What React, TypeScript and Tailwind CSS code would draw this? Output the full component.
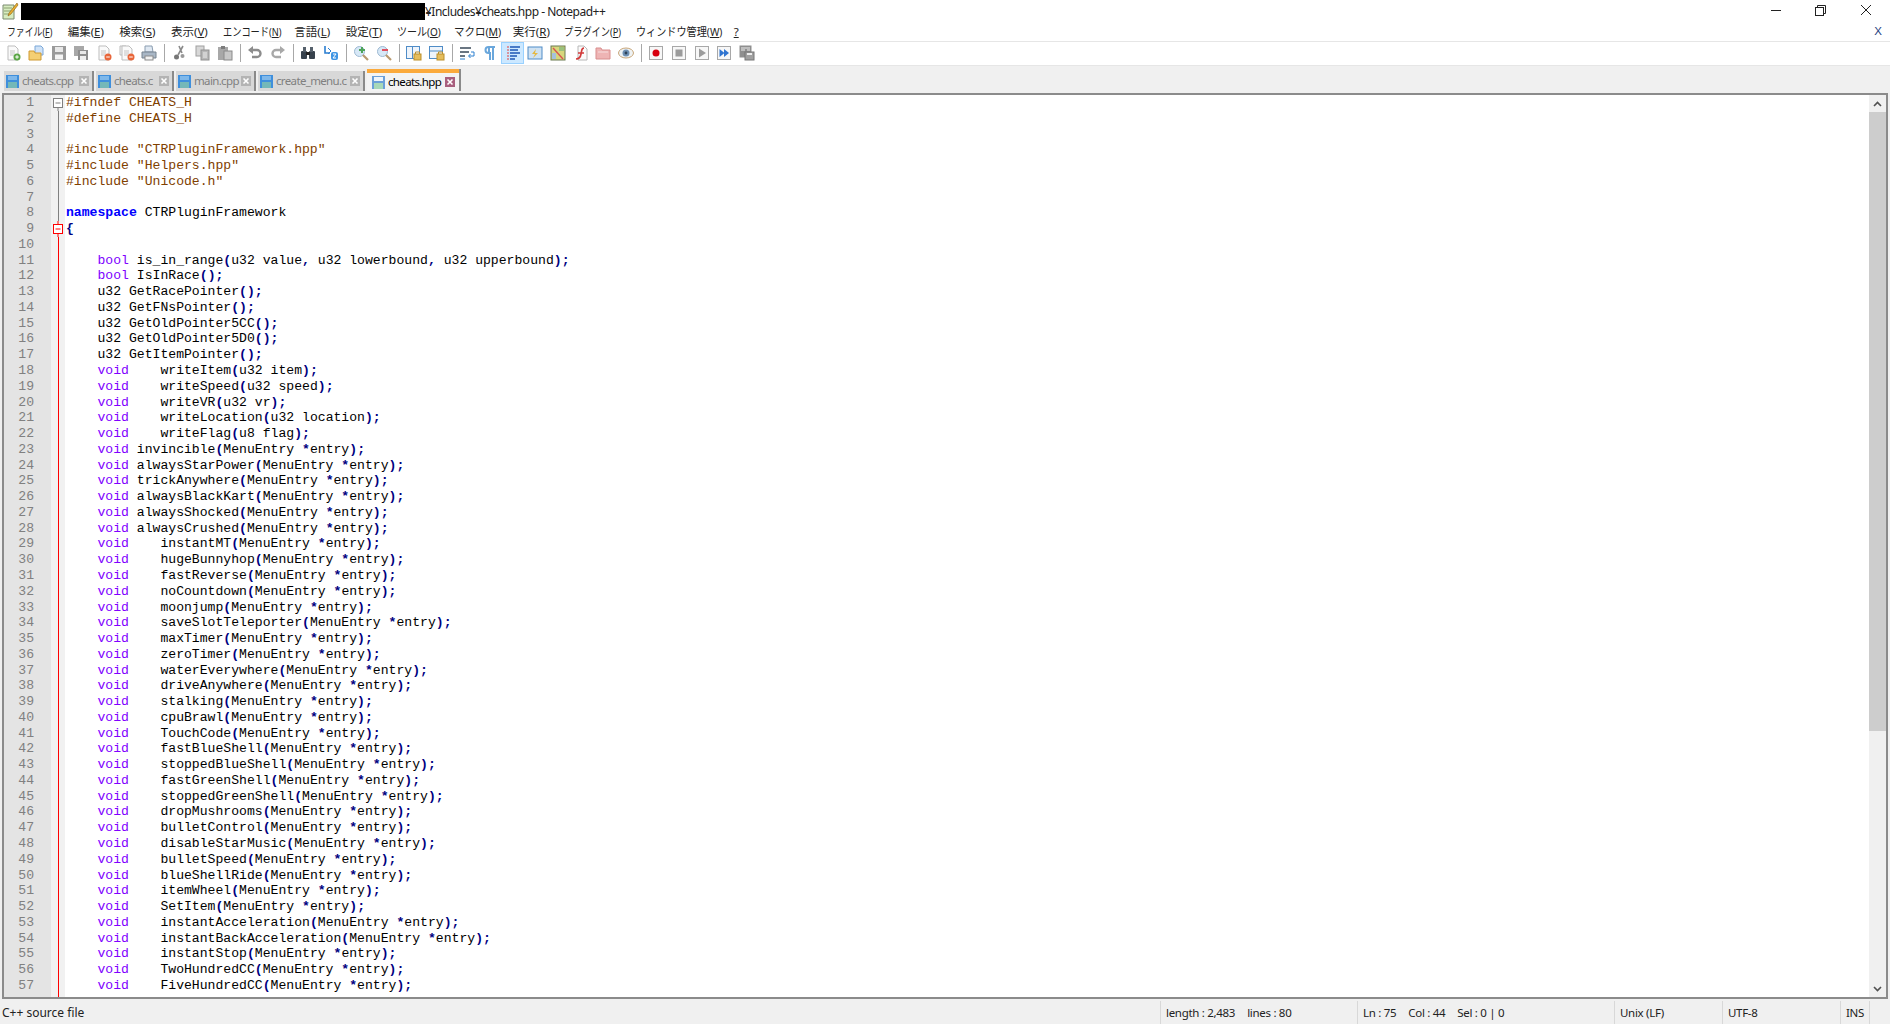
import type { ReactNode } from "react";

const code = `#ifndef CHEATS_H
#define CHEATS_H

#include "CTRPluginFramework.hpp"
#include "Helpers.hpp"
#include "Unicode.h"

namespace CTRPluginFramework
{

    bool is_in_range(u32 value, u32 lowerbound, u32 upperbound);
    bool IsInRace();
    u32 GetRacePointer();
    u32 GetFNsPointer();
    u32 GetOldPointer5CC();
    u32 GetOldPointer5D0();
    u32 GetItemPointer();
    void    writeItem(u32 item);
    void    writeSpeed(u32 speed);
    void    writeVR(u32 vr);
    void    writeLocation(u32 location);
    void    writeFlag(u8 flag);
    void invincible(MenuEntry *entry);
    void alwaysStarPower(MenuEntry *entry);
    void trickAnywhere(MenuEntry *entry);
    void alwaysBlackKart(MenuEntry *entry);
    void alwaysShocked(MenuEntry *entry);
    void alwaysCrushed(MenuEntry *entry);
    void    instantMT(MenuEntry *entry);
    void    hugeBunnyhop(MenuEntry *entry);
    void    fastReverse(MenuEntry *entry);
    void    noCountdown(MenuEntry *entry);
    void    moonjump(MenuEntry *entry);
    void    saveSlotTeleporter(MenuEntry *entry);
    void    maxTimer(MenuEntry *entry);
    void    zeroTimer(MenuEntry *entry);
    void    waterEverywhere(MenuEntry *entry);
    void    driveAnywhere(MenuEntry *entry);
    void    stalking(MenuEntry *entry);
    void    cpuBrawl(MenuEntry *entry);
    void    TouchCode(MenuEntry *entry);
    void    fastBlueShell(MenuEntry *entry);
    void    stoppedBlueShell(MenuEntry *entry);
    void    fastGreenShell(MenuEntry *entry);
    void    stoppedGreenShell(MenuEntry *entry);
    void    dropMushrooms(MenuEntry *entry);
    void    bulletControl(MenuEntry *entry);
    void    disableStarMusic(MenuEntry *entry);
    void    bulletSpeed(MenuEntry *entry);
    void    blueShellRide(MenuEntry *entry);
    void    itemWheel(MenuEntry *entry);
    void    SetItem(MenuEntry *entry);
    void    instantAcceleration(MenuEntry *entry);
    void    instantBackAcceleration(MenuEntry *entry);
    void    instantStop(MenuEntry *entry);
    void    TwoHundredCC(MenuEntry *entry);
    void    FiveHundredCC(MenuEntry *entry);`.split("\n");

function CodeLine({ text }: { text: string }) {
  if (text.startsWith("#")) return <span className="text-[#804000]">{text}</span>;
  const parts = text.split(/(\bnamespace\b|\bbool\b|\bvoid\b|[(){}*;,])/);
  return (
    <>
      {parts.map((p, i) => {
        if (p === "namespace") return <span key={i} className="font-bold text-[#0000ff]">{p}</span>;
        if (p === "bool" || p === "void") return <span key={i} className="text-[#8000ff]">{p}</span>;
        if (/^[(){}*;,]$/.test(p)) return <span key={i} className="font-bold text-[#000080]">{p}</span>;
        return <span key={i}>{p}</span>;
      })}
    </>
  );
}

function FoldMark({ line }: { line: number }) {
  if (line === 1 || line === 9) {
    const red = line === 9;
    return (
      <svg width="14" height="16" viewBox="0 0 14 16" className="block">
        {red && <path d="M7 0V16" stroke="#ff0000" />}
        {!red && <path d="M7 8V16" stroke="#808080" />}
        <rect x="2.5" y="3.5" width="9" height="9" fill="#fff" stroke={red ? "#ff0000" : "#808080"} />
        <path d="M4.5 8H9.5" stroke={red ? "#ff0000" : "#808080"} />
      </svg>
    );
  }
  return (
    <div className="flex h-full justify-center">
      <div className={line < 9 ? "h-full w-px bg-[#808080]" : "h-full w-px bg-[#ff0000]"} />
    </div>
  );
}

function Icon({ children }: { children: ReactNode }) {
  return (
    <svg width="16" height="16" viewBox="0 0 16 16" className="block">
      {children}
    </svg>
  );
}

function SaveGlyph({ fill = "#9a9a9a", slot = "#e8e8e8" }: { fill?: string; slot?: string }) {
  return (
    <>
      <rect x="1" y="1" width="14" height="14" fill={fill} />
      <rect x="4" y="2" width="8" height="5" fill={slot} />
      <rect x="4" y="9.5" width="8" height="5" fill="#f4f4f4" />
    </>
  );
}

function Doc({ badge }: { badge?: string }) {
  return (
    <>
      <path d="M3 1H10L13 4V15H3Z" fill="#fafafa" stroke="#bdbdbd" />
      <path d="M5 6H10M5 8H10M5 10H9" stroke="#c4c4c4" />
      {badge && <circle cx="12" cy="12" r="3.5" fill={badge} />}
      {badge && <path d="M10.2 12H13.8" stroke="#fff" />}
    </>
  );
}

const toolbarIcons: Record<string, ReactNode> = {
  new: (
    <Icon>
      <Doc badge="#5aa545" />
      <path d="M12 10.2V13.8" stroke="#fff" />
    </Icon>
  ),
  open: (
    <Icon>
      <path d="M7 1H13L15 3V10H7Z" fill="#cfe2f7" stroke="#7aa7d8" />
      <path d="M1 6H6L7 8H13V15H1Z" fill="#f4cf73" stroke="#cf9a33" />
    </Icon>
  ),
  save: (
    <Icon>
      <SaveGlyph />
    </Icon>
  ),
  saveAll: (
    <Icon>
      <rect x="1" y="1" width="10" height="10" fill="#a8a8a8" />
      <rect x="5" y="5" width="10" height="10" fill="#8e8e8e" />
      <rect x="7" y="6" width="6" height="3" fill="#e8e8e8" />
      <rect x="7" y="11" width="6" height="4" fill="#efefef" />
    </Icon>
  ),
  close: (
    <Icon>
      <Doc badge="#e8663a" />
    </Icon>
  ),
  closeAll: (
    <Icon>
      <path d="M1 1H7L9 3V10H1Z" fill="#f4f4f4" stroke="#bdbdbd" />
      <Doc badge="#e8663a" />
    </Icon>
  ),
  print: (
    <Icon>
      <path d="M4 1H11L12 7H4Z" fill="#dfe8f2" stroke="#8b9db0" />
      <path d="M1 7H15V13H1Z" fill="#a9b7c6" stroke="#76838f" />
      <rect x="4" y="11" width="8" height="4" fill="#f2f2f2" stroke="#8b8b8b" />
    </Icon>
  ),
  cut: (
    <Icon>
      <path d="M11 1L6 10M7 1L10 8" stroke="#8a8a8a" strokeWidth="1.6" fill="none" />
      <circle cx="4.5" cy="12" r="2.5" fill="#777" />
      <circle cx="10.5" cy="11" r="2" fill="#999" />
    </Icon>
  ),
  copy: (
    <Icon>
      <rect x="2" y="1" width="8" height="10" fill="#d8d8d8" stroke="#a0a0a0" />
      <rect x="7" y="5" width="8" height="10" fill="#b8b8b8" stroke="#909090" />
      <path d="M9 8H13M9 10H13M9 12H13" stroke="#ececec" />
    </Icon>
  ),
  paste: (
    <Icon>
      <rect x="1" y="2" width="10" height="13" fill="#a8a8a8" />
      <rect x="4" y="1" width="4" height="3" fill="#7c7c7c" />
      <rect x="7" y="6" width="8" height="9" fill="#c8c8c8" stroke="#8a8a8a" />
    </Icon>
  ),
  undo: (
    <Icon>
      <path d="M5 12H10A3.5 3.5 0 0 0 10 5H3" stroke="#8c8c8c" strokeWidth="2.4" fill="none" />
      <path d="M6 1V9L1 5Z" fill="#8c8c8c" />
    </Icon>
  ),
  redo: (
    <Icon>
      <path d="M11 12H6A3.5 3.5 0 0 1 6 5H13" stroke="#a8a8a8" strokeWidth="2.4" fill="none" />
      <path d="M10 1V9L15 5Z" fill="#a8a8a8" />
    </Icon>
  ),
  find: (
    <Icon>
      <rect x="1" y="6" width="6" height="8" rx="1" fill="#37424d" />
      <rect x="9" y="6" width="6" height="8" rx="1" fill="#37424d" />
      <rect x="3" y="2" width="3" height="5" fill="#56616c" />
      <rect x="10" y="2" width="3" height="5" fill="#56616c" />
      <rect x="6" y="7" width="4" height="3" fill="#222" />
    </Icon>
  ),
  replace: (
    <Icon>
      <path d="M2 1V8H7" stroke="#2c7fd1" strokeWidth="1.6" fill="none" />
      <path d="M5 3L8 6L5 9" stroke="#2c7fd1" fill="none" />
      <rect x="8" y="7" width="7" height="8" rx="2" fill="#3f95e4" />
      <path d="M10 9H13L10 13H13" stroke="#fff" fill="none" />
    </Icon>
  ),
  zoomIn: (
    <Icon>
      <circle cx="6.5" cy="6.5" r="5" fill="#d7e8f7" stroke="#9db9d2" />
      <path d="M10 10L15 15" stroke="#b99a70" strokeWidth="2.2" />
      <path d="M9 2V8M6 5H12" stroke="#4ea45a" strokeWidth="2" />
    </Icon>
  ),
  zoomOut: (
    <Icon>
      <circle cx="6.5" cy="6.5" r="5" fill="#d7e8f7" stroke="#9db9d2" />
      <path d="M10 10L15 15" stroke="#b99a70" strokeWidth="2.2" />
      <path d="M6 5H12" stroke="#e05060" strokeWidth="2" />
    </Icon>
  ),
  sync1: (
    <Icon>
      <rect x="0.5" y="1.5" width="13" height="12" fill="#eef4fb" stroke="#4f8cc7" />
      <path d="M6.5 2V13" stroke="#4f8cc7" />
      <rect x="8" y="9" width="7" height="6" fill="#e5bd5c" stroke="#bb8f2b" />
      <path d="M9.5 9V7H13.5V9" stroke="#bb8f2b" fill="none" />
    </Icon>
  ),
  sync2: (
    <Icon>
      <rect x="0.5" y="1.5" width="13" height="12" fill="#eef4fb" stroke="#4f8cc7" />
      <path d="M1 6H13" stroke="#4f8cc7" />
      <rect x="8" y="9" width="7" height="6" fill="#e5bd5c" stroke="#bb8f2b" />
      <path d="M9.5 9V7H13.5V9" stroke="#bb8f2b" fill="none" />
    </Icon>
  ),
  wrap: (
    <Icon>
      <path d="M1 3H12M1 7H10M1 11H6" stroke="#3a4a5a" strokeWidth="1.3" />
      <path d="M12 7H15V11H10" stroke="#2c80d0" fill="none" />
      <path d="M11.5 9L9.5 11L11.5 13" stroke="#2c80d0" fill="none" />
      <path d="M1 14H6" stroke="#2c80d0" />
    </Icon>
  ),
  para: (
    <Icon>
      <path d="M13 2H6.5A3 3 0 0 0 6.5 8H8V15M11 2V15" stroke="#6aa7dc" strokeWidth="2" fill="none" />
      <path d="M7 3V7" stroke="#6aa7dc" strokeWidth="2" />
    </Icon>
  ),
  guide: (
    <Icon>
      <path d="M3 1V15" stroke="#e04040" strokeDasharray="2 1" />
      <path d="M5 2H15M5 5H13M5 8H15M5 11H12M5 14H10" stroke="#1d55b5" strokeWidth="1.3" />
    </Icon>
  ),
  udl: (
    <Icon>
      <rect x="1" y="2" width="14" height="12" fill="#cfe2f3" stroke="#4f8cc7" />
      <path d="M9 4L5 9H8L6 13L11 8H8Z" fill="#e5b840" />
    </Icon>
  ),
  map: (
    <Icon>
      <rect x="1" y="1" width="14" height="14" fill="#d7d77c" stroke="#6b7a52" />
      <path d="M3 3L13 14" stroke="#d9534f" strokeWidth="1.4" />
      <path d="M9 2H14V6H9Z" fill="#9ac27c" />
      <path d="M2 8H6V14H2Z" fill="#a4c1dc" />
    </Icon>
  ),
  func: (
    <Icon>
      <path d="M5 1H11L14 4V15H5Z" fill="#fbfbfb" stroke="#b8b8b8" />
      <path d="M11 3C8 3 9 6 8 9C7.5 12 6.5 14 3 14M5 8H11" stroke="#d23b3b" strokeWidth="1.7" fill="none" />
    </Icon>
  ),
  folder: (
    <Icon>
      <path d="M1 3H6L7 5H15V14H1Z" fill="#eeb4b4" stroke="#d98e8e" />
      <path d="M3 7H13" stroke="#f7dede" />
    </Icon>
  ),
  eye: (
    <Icon>
      <ellipse cx="8" cy="8" rx="7.5" ry="5" fill="#eef2f4" stroke="#c9a77a" />
      <circle cx="8" cy="8" r="3.5" fill="#6d8fb2" />
      <circle cx="8" cy="8" r="1.4" fill="#2f4257" />
    </Icon>
  ),
  rec: (
    <Icon>
      <rect x="1.5" y="1.5" width="13" height="13" fill="#f7f7f7" stroke="#a8a8a8" />
      <circle cx="8" cy="8" r="3.5" fill="#d8000f" />
    </Icon>
  ),
  stop: (
    <Icon>
      <rect x="1.5" y="1.5" width="13" height="13" fill="#f7f7f7" stroke="#a8a8a8" />
      <rect x="4.5" y="4.5" width="7" height="7" fill="#9b9b9b" />
    </Icon>
  ),
  play: (
    <Icon>
      <rect x="1.5" y="1.5" width="13" height="13" fill="#f7f7f7" stroke="#a8a8a8" />
      <path d="M5 3.5L12 8L5 12.5Z" fill="#9b9b9b" />
    </Icon>
  ),
  playMulti: (
    <Icon>
      <rect x="1.5" y="1.5" width="13" height="13" fill="#f7f7f7" stroke="#a8a8a8" />
      <path d="M3.5 4L8.5 8L3.5 12ZM8 4L13 8L8 12Z" fill="#2f74d0" />
    </Icon>
  ),
  saveMacro: (
    <Icon>
      <rect x="0.5" y="0.5" width="12" height="12" fill="#8f8f8f" />
      <path d="M2 3H11M2 5H6M8 5H11" stroke="#eee" />
      <rect x="6" y="7" width="9" height="8" fill="#a0a0a0" stroke="#777" />
      <rect x="8" y="8" width="5" height="2" fill="#eee" />
    </Icon>
  ),
};

// null = separator
const toolbar: (string | null)[] = [
  "new", "open", "save", "saveAll", "close", "closeAll", "print", null,
  "cut", "copy", "paste", null,
  "undo", "redo", null,
  "find", "replace", null,
  "zoomIn", "zoomOut", null,
  "sync1", "sync2", null,
  "wrap", "para", "guide", "udl", "map", "func", "folder", "eye", null,
  "rec", "stop", "play", "playMulti", "saveMacro",
];

// the original UI font has narrow kana, so those items get squeezed into a fixed box
const menus = [
  { label: "ファイル(", key: "F", box: "w-[46px]", squeeze: "scale-x-[0.77]" },
  { label: "編集(", key: "E", box: "w-[37px]", squeeze: "scale-x-100" },
  { label: "検索(", key: "S", box: "w-[37px]", squeeze: "scale-x-100" },
  { label: "表示(", key: "V", box: "w-[37px]", squeeze: "scale-x-100" },
  { label: "エンコード(", key: "N", box: "w-[57px]", squeeze: "scale-x-[0.8]" },
  { label: "言語(", key: "L", box: "w-[37px]", squeeze: "scale-x-100" },
  { label: "設定(", key: "T", box: "w-[37px]", squeeze: "scale-x-100" },
  { label: "ツール(", key: "O", box: "w-[42px]", squeeze: "scale-x-[0.87]" },
  { label: "マクロ(", key: "M", box: "w-[44px]", squeeze: "scale-x-[0.91]" },
  { label: "実行(", key: "R", box: "w-[37px]", squeeze: "scale-x-100" },
  { label: "プラグイン(", key: "P", box: "w-[57px]", squeeze: "scale-x-[0.8]" },
  { label: "ウィンドウ管理(", key: "W", box: "w-[83px]", squeeze: "scale-x-[0.88]" },
];

const tabs = [
  { name: "cheats.cpp", width: "w-[90px]" },
  { name: "cheats.c", width: "w-[78px]" },
  { name: "main.cpp", width: "w-[80px]" },
  { name: "create_menu.c", width: "w-[107px]" },
];

function TabSave({ active }: { active?: boolean }) {
  return (
    <svg width="13" height="13" viewBox="0 0 13 13" className="block shrink-0">
      <rect width="13" height="13" fill={active ? "#6b9fd8" : "#3f8fdc"} />
      <rect x="2" y="1" width="9" height="4" fill={active ? "#eef4fb" : "#7fb8ea"} />
      <rect x="2" y="7" width="9" height="6" fill={active ? "#a8d8b8" : "#74b8b8"} />
    </svg>
  );
}

function TabClose({ active }: { active?: boolean }) {
  return (
    <svg width="10" height="10" viewBox="0 0 10 10" className="block shrink-0">
      <rect width="10" height="10" fill={active ? "#a85f7e" : "#b4b4b4"} />
      <path d="M2.5 2.5L7.5 7.5M7.5 2.5L2.5 7.5" stroke="#fff" strokeWidth="1.6" />
    </svg>
  );
}

export default function App() {
  return (
    <div className="flex h-screen flex-col overflow-hidden bg-[#f0f0f0] font-['Noto_Sans','Noto_Sans_CJK_JP',sans-serif] text-[12px] text-black">
      {/* Title bar */}
      <div className="flex h-[22px] shrink-0 items-center bg-white">
        <svg width="18" height="18" viewBox="0 0 18 18" className="ml-[1px] shrink-0">
          <path d="M2 3H13V17H2Z" fill="#d7ecc0" stroke="#7b8a70" />
          <path d="M3 6H11M3 9H11M3 12H9" stroke="#8aa070" />
          <path d="M16 1L8 11L7 14L10 12L17 3Z" fill="#e8b030" stroke="#8a5a10" strokeWidth="0.6" />
        </svg>
        <div className="ml-[2px] h-[17px] w-[404px] shrink-0 bg-black" />
        <span className="whitespace-nowrap pt-[2px] text-[12px] tracking-[-0.5px] text-[#222]">¥Includes¥cheats.hpp - Notepad++</span>
        <div className="ml-auto mr-[1px] flex items-center">
          <svg width="46" height="22" viewBox="0 0 46 22"><path d="M18 10.5H28" stroke="#222" /></svg>
          <svg width="46" height="22" viewBox="0 0 46 22" className="ml-[-2px]">
            <rect x="18.5" y="7.5" width="8" height="8" fill="none" stroke="#222" />
            <path d="M20.5 7.5V5.5H28.5V13.5H26.5" fill="none" stroke="#222" />
          </svg>
          <svg width="46" height="22" viewBox="0 0 46 22"><path d="M18 5L28 15M28 5L18 15" stroke="#222" /></svg>
        </div>
      </div>

      {/* Menu bar */}
      <div className="flex h-[19px] shrink-0 items-center gap-[14.65px] bg-white pl-[7px] pr-[8px] text-[11.5px] text-[#222]">
        {menus.map((m) => (
          <div key={m.key} className={`${m.box} shrink-0`}>
            <span className={`inline-block origin-left whitespace-nowrap ${m.squeeze}`}>
              {m.label}
              <span className="underline">{m.key}</span>)
            </span>
          </div>
        ))}
        <span className="underline">?</span>
        <span className="ml-auto font-['Liberation_Sans',sans-serif] text-[#1f3f7f]">X</span>
      </div>

      {/* Toolbar */}
      <div className="flex h-[25px] shrink-0 items-center border-y border-[#e6e6e6] bg-white pb-[1px] pl-[2px]">
        {toolbar.map((t, i) =>
          t === null ? (
            <div key={i} className="mx-[3.3px] h-[18px] w-px shrink-0 bg-[#a8a8a8]" />
          ) : (
            <div
              key={i}
              className={
                t === "guide"
                  ? "flex h-[22px] w-[22.7px] shrink-0 items-center justify-center border border-[#99d1ff] bg-[#cce8ff]"
                  : "flex h-[22px] w-[22.7px] shrink-0 items-center justify-center"
              }
            >
              {toolbarIcons[t]}
            </div>
          )
        )}
      </div>

      {/* Tabs */}
      <div className="flex h-[27px] shrink-0 items-end pb-[2px] pl-[4px] text-[11.5px]">
        {tabs.map((t) => (
          <div
            key={t.name}
            className={`${t.width} mr-[2px] flex h-[20px] shrink-0 items-center border-r-2 border-[#8a8a8a] bg-[#d8d8d8] pl-[2px] pr-[3px] text-[#808080]`}
          >
            <TabSave />
            <span className="min-w-0 flex-1 whitespace-nowrap pl-[3px] tracking-[-0.65px]">{t.name}</span>
            <TabClose />
          </div>
        ))}
        <div className="flex h-[22px] w-[94px] shrink-0 flex-col border-r-2 border-[#8a8a8a] bg-[#f3f3f3]">
          <div className="h-[4px] bg-[#fbaa3c]" />
          <div className="flex flex-1 items-center pl-[5px] pr-[4px]">
            <TabSave active />
            <span className="min-w-0 flex-1 whitespace-nowrap pl-[3px] tracking-[-0.65px] text-black">cheats.hpp</span>
            <TabClose active />
          </div>
        </div>
      </div>

      {/* Editor */}
      <div className="mx-[2px] flex min-h-0 flex-1 border-2 border-b-2 border-[#8b8b8b] bg-white">
        <div className="min-w-0 flex-1 overflow-hidden font-['Liberation_Mono',monospace] text-[13.12px] leading-[15.77px] text-black">
          {code.map((line, i) => (
            <div key={i} className="flex h-[15.77px]">
              <div className="w-[47px] shrink-0 bg-[#e4e4e4] pr-[17px] text-right text-[#808080]">{i + 1}</div>
              <div className="w-[14px] shrink-0 bg-[#f1f1f1]">
                <FoldMark line={i + 1} />
              </div>
              <div className="min-w-0 flex-1 whitespace-pre pl-px">
                <CodeLine text={line} />
              </div>
            </div>
          ))}
          <div className="flex h-full">
            <div className="w-[47px] shrink-0 bg-[#e4e4e4]" />
            <div className="w-[14px] shrink-0 bg-[#f1f1f1]">
              <FoldMark line={10} />
            </div>
          </div>
        </div>

        {/* Scrollbar */}
        <div className="flex w-[17px] shrink-0 flex-col bg-[#f0f0f0]">
          <div className="flex h-[17px] shrink-0 items-center justify-center">
            <svg width="9" height="6" viewBox="0 0 9 6"><path d="M1 5L4.5 1.5L8 5" stroke="#505050" strokeWidth="1.6" fill="none" /></svg>
          </div>
          <div className="h-[619px] shrink-0 bg-[#cdcdcd]" />
          <div className="flex-1" />
          <div className="flex h-[17px] shrink-0 items-center justify-center">
            <svg width="9" height="6" viewBox="0 0 9 6"><path d="M1 1L4.5 4.5L8 1" stroke="#505050" strokeWidth="1.6" fill="none" /></svg>
          </div>
        </div>
      </div>

      {/* Status bar */}
      <div className="flex h-[25px] shrink-0 items-center pt-[2px] text-[11.5px] tracking-[-0.3px] text-[#222]">
        <div className="flex-1 pl-[2px] text-[12px] tracking-normal">C++ source file</div>
        <div className="flex h-full w-[197px] shrink-0 items-center gap-[12px] border-l border-[#d8d8d8] pl-[5px]">
          <span>length : 2,483</span>
          <span>lines : 80</span>
        </div>
        <div className="flex h-full w-[257px] shrink-0 items-center gap-[12px] border-l border-[#d8d8d8] pl-[5px]">
          <span>Ln : 75</span>
          <span>Col : 44</span>
          <span>Sel : 0 | 0</span>
        </div>
        <div className="flex h-full w-[108px] shrink-0 items-center border-l border-[#d8d8d8] pl-[5px]">Unix (LF)</div>
        <div className="flex h-full w-[118px] shrink-0 items-center border-l border-[#d8d8d8] pl-[5px]">UTF-8</div>
        <div className="flex h-full w-[30px] shrink-0 items-center border-x border-[#d8d8d8] pl-[5px]">INS</div>
        <div className="w-[20px] shrink-0" />
      </div>
    </div>
  );
}
